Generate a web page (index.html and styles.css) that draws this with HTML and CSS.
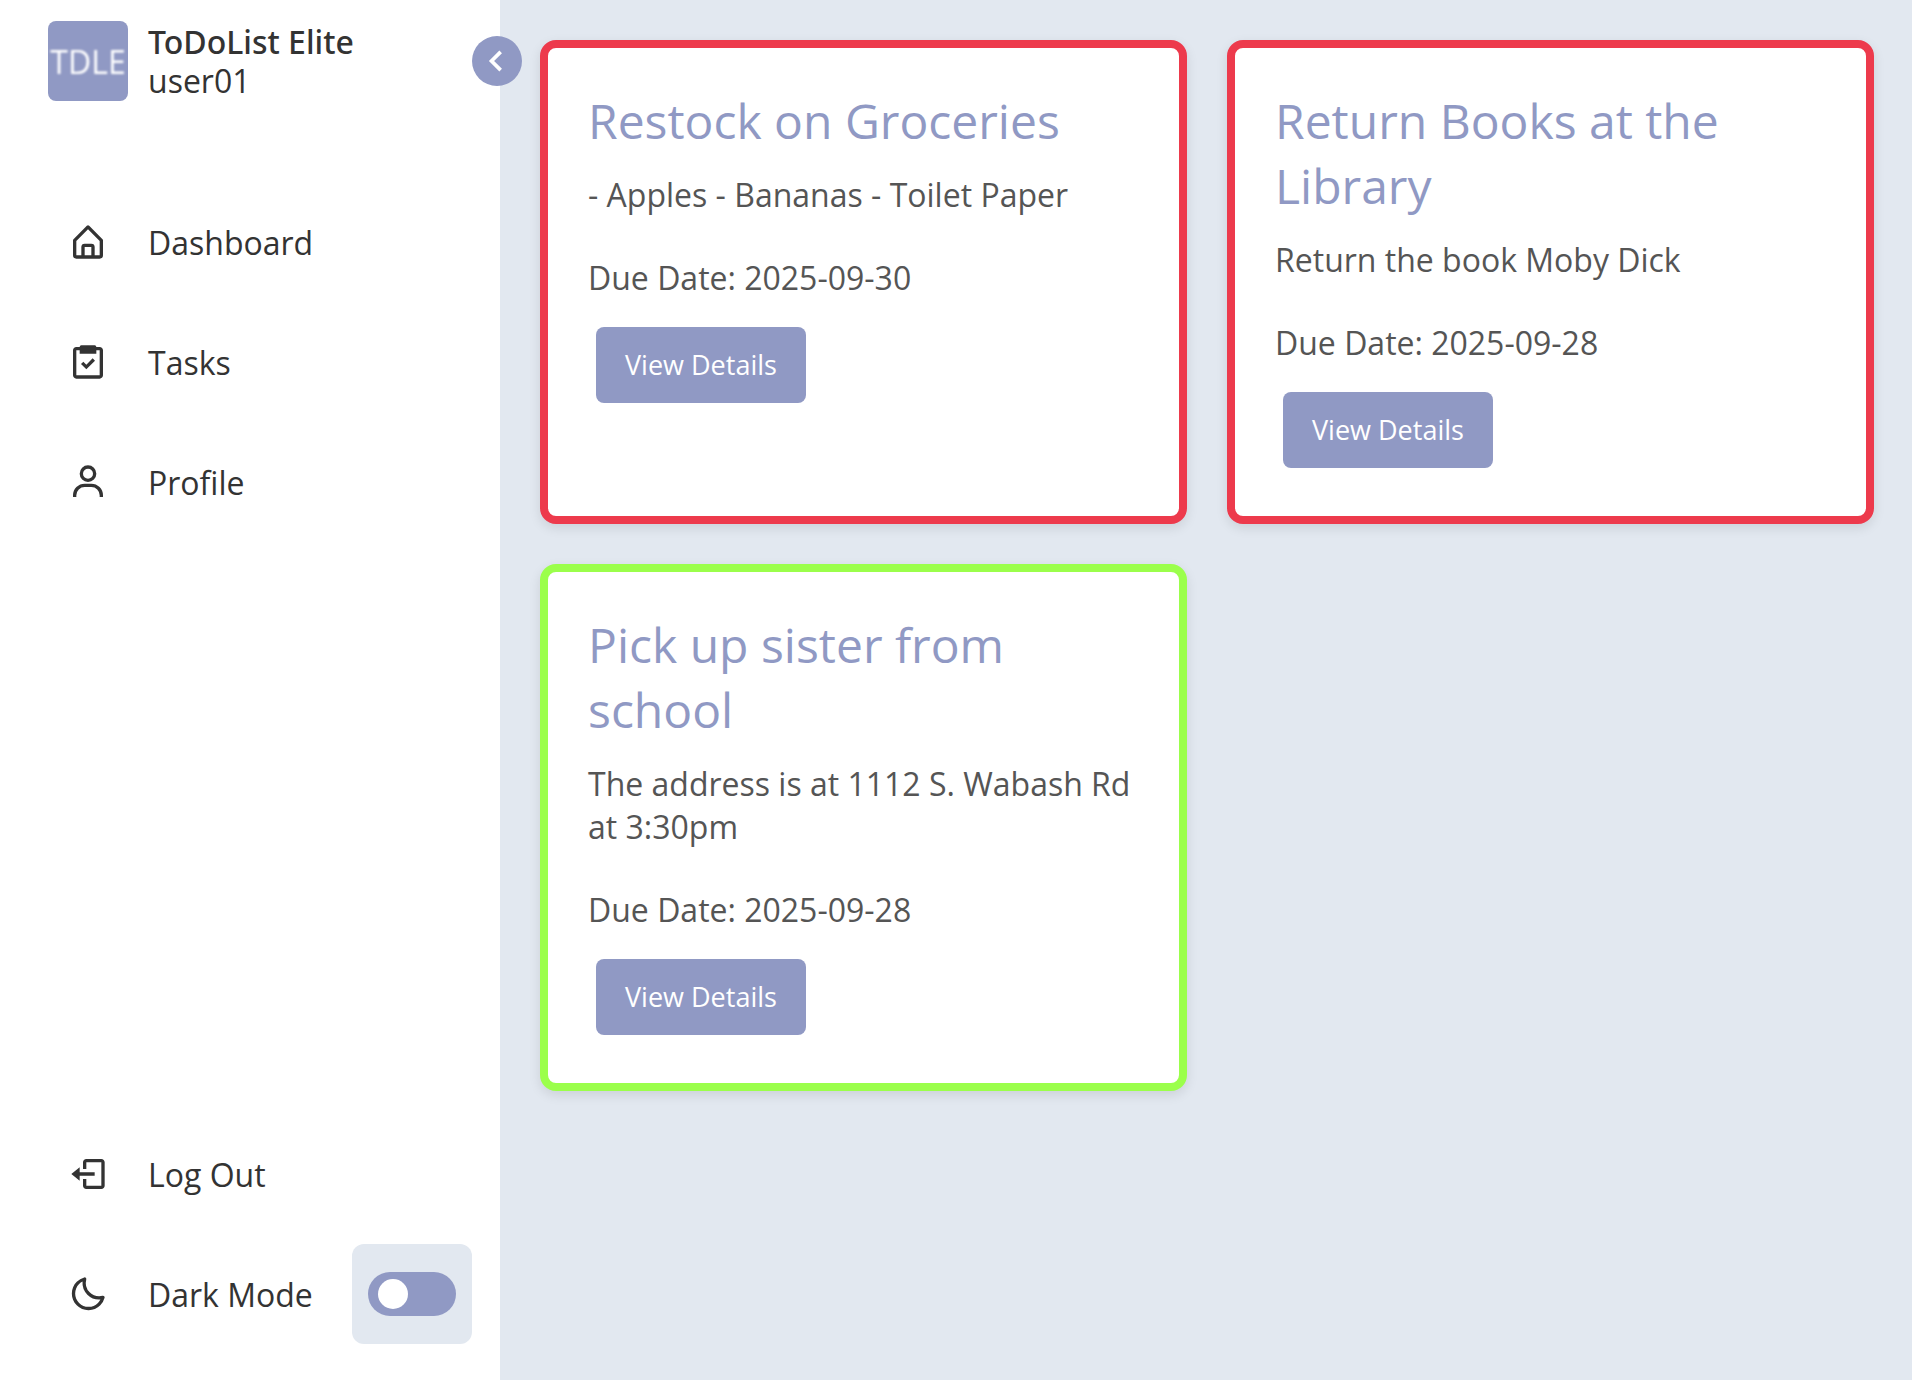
FILE: index.html
```html
<!DOCTYPE html>
<html lang="en">
<head>
<meta charset="utf-8">
<meta name="viewport" content="width=device-width, initial-scale=1">
<title>ToDoList Elite</title>
<link rel="stylesheet" href="styles.css">
</head>
<body>
<div class="app">
  <nav class="sidebar" aria-label="Main">
    <header class="brand">
      <span class="logo"><span class="logo-text">TDLE</span></span>
      <div class="brand-text">
        <span class="brand-name">ToDoList Elite</span>
        <span class="brand-user">user01</span>
      </div>
      <button class="collapse" type="button" aria-label="Collapse sidebar">
        <svg viewBox="0 0 24 24" aria-hidden="true"><path d="M13.293 6.293 7.586 12l5.707 5.707 1.414-1.414L10.414 12l4.293-4.293z"/></svg>
      </button>
    </header>
    <ul class="menu">
      <li><a class="menu-item" href="#dashboard">
        <svg class="icon" viewBox="0 0 24 24" aria-hidden="true"><path d="M5 22h14a2 2 0 0 0 2-2v-9a1 1 0 0 0-.29-.71l-8-8a1 1 0 0 0-1.41 0l-8 8A1 1 0 0 0 3 11v9a2 2 0 0 0 2 2zm5-2v-5h4v5zm-5-8.59 7-7 7 7V20h-3v-5a2 2 0 0 0-2-2h-4a2 2 0 0 0-2 2v5H5z"/></svg>
        <span>Dashboard</span></a></li>
      <li><a class="menu-item" href="#tasks">
        <svg class="icon" viewBox="0 0 24 24" aria-hidden="true"><path d="M5 22h14c1.103 0 2-.897 2-2V5c0-1.103-.897-2-2-2h-2a1 1 0 0 0-1-1H8a1 1 0 0 0-1 1H5c-1.103 0-2 .897-2 2v15c0 1.103.897 2 2 2zM5 5h2v2h10V5h2v15H5V5z"/><path d="m11 13.586-1.793-1.793-1.414 1.414L11 16.414l5.207-5.207-1.414-1.414z"/></svg>
        <span>Tasks</span></a></li>
      <li><a class="menu-item" href="#profile">
        <svg class="icon" viewBox="0 0 24 24" aria-hidden="true"><path d="M12 2a5 5 0 1 0 5 5 5 5 0 0 0-5-5zm0 8a3 3 0 1 1 3-3 3 3 0 0 1-3 3zm9 11v-1a7 7 0 0 0-7-7h-4a7 7 0 0 0-7 7v1h2v-1a5 5 0 0 1 5-5h4a5 5 0 0 1 5 5v1z"/></svg>
        <span>Profile</span></a></li>
    </ul>
    <ul class="menu menu-bottom">
      <li><a class="menu-item" href="#logout">
        <svg class="icon" viewBox="0 0 24 24" aria-hidden="true"><path d="m2 12 5 4v-3h9v-2H7V8z"/><path d="M20 3h-9c-1.103 0-2 .897-2 2v4h2V5h9v14h-9v-4H9v4c0 1.103.897 2 2 2h9c1.103 0 2-.897 2-2V5c0-1.103-.897-2-2-2z"/></svg>
        <span>Log Out</span></a></li>
      <li class="menu-item">
        <svg class="icon" viewBox="0 0 24 24" aria-hidden="true"><path d="M20.742 13.045a8.088 8.088 0 0 1-2.077.271c-2.135 0-4.14-.83-5.646-2.336a8.025 8.025 0 0 1-2.064-7.723A1 1 0 0 0 9.73 2.034a10.014 10.014 0 0 0-4.489 2.582c-3.898 3.898-3.898 10.243 0 14.143a9.937 9.937 0 0 0 7.072 2.93 9.93 9.93 0 0 0 7.07-2.929 10.007 10.007 0 0 0 2.583-4.491 1.001 1.001 0 0 0-1.224-1.224zm-2.772 4.301a7.947 7.947 0 0 1-5.656 2.343 7.953 7.953 0 0 1-5.658-2.344c-3.118-3.119-3.118-8.195 0-11.314a7.923 7.923 0 0 1 2.06-1.483 10.027 10.027 0 0 0 2.89 7.848 9.972 9.972 0 0 0 7.848 2.891 8.036 8.036 0 0 1-1.484 2.059z"/></svg>
        <label for="dark-mode">Dark Mode</label>
        <span class="switch-box"><input class="switch" type="checkbox" role="switch" id="dark-mode"></span>
      </li>
    </ul>
  </nav>
  <main class="tasks">
    <article class="card card-red">
      <h2 class="card-title">Restock on Groceries</h2>
      <p class="card-text">- Apples - Bananas - Toilet Paper</p>
      <p class="card-due">Due Date: 2025-09-30</p>
      <button class="details" type="button">View Details</button>
    </article>
    <article class="card card-red">
      <h2 class="card-title">Return Books at the Library</h2>
      <p class="card-text">Return the book Moby Dick</p>
      <p class="card-due">Due Date: 2025-09-28</p>
      <button class="details" type="button">View Details</button>
    </article>
    <article class="card card-green">
      <h2 class="card-title">Pick up sister from school</h2>
      <p class="card-text">The address is at 1112 S. Wabash Rd at 3:30pm</p>
      <p class="card-due">Due Date: 2025-09-28</p>
      <button class="details" type="button">View Details</button>
    </article>
  </main>
</div>
</body>
</html>
```
FILE: styles.css
```css
:root {
  --accent: #9099c4;
  --page: #e2e8f0;
  --ink: #333;
  --muted: #555;
}

* {
  box-sizing: border-box;
  margin: 0;
  padding: 0;
}

body {
  background: var(--page);
  color: var(--ink);
  font: 32px/43px "Open Sans", "Noto Sans", sans-serif;
}

.app {
  display: flex;
  min-height: 100vh;
}

/* Sidebar */
.sidebar {
  display: flex;
  flex-direction: column;
  flex: 0 0 500px;
  padding: 21px 28px 36px 48px;
  background: #fff;
}

.brand {
  position: relative;
  display: flex;
  align-items: center;
  gap: 20px;
}

.logo {
  display: flex;
  align-items: center;
  justify-content: center;
  width: 80px;
  height: 80px;
  border-radius: 8px;
  background: var(--accent);
  color: #fff;
}

.logo-text {
  filter: blur(1px);
}

.brand-text {
  display: flex;
  flex-direction: column;
  line-height: 39px;
}

.brand-name {
  font-family: "Noto Sans", "Open Sans", sans-serif;
  font-weight: 500;
}

.collapse {
  position: absolute;
  top: 15px;
  right: -50px;
  display: flex;
  align-items: center;
  justify-content: center;
  width: 50px;
  height: 50px;
  border: 0;
  border-radius: 50%;
  background: var(--accent);
}

.collapse svg {
  width: 44px;
  height: 44px;
  flex: none;
  fill: #fff;
}

.menu {
  display: flex;
  flex-direction: column;
  gap: 20px;
  margin-top: 91px;
  list-style: none;
}

.menu-bottom {
  margin-top: auto;
}

.menu-item {
  display: flex;
  align-items: center;
  height: 100px;
  color: inherit;
  text-decoration: none;
}

.icon {
  width: 40px;
  height: 40px;
  margin: 0 40px 0 20px;
  fill: currentColor;
}

.switch-box {
  display: flex;
  align-items: center;
  justify-content: center;
  width: 120px;
  height: 100px;
  margin-left: auto;
  border-radius: 12px;
  background: var(--page);
}

.switch {
  appearance: none;
  display: flex;
  align-items: center;
  width: 88px;
  height: 44px;
  padding: 0 10px;
  border-radius: 22px;
  background: var(--accent);
}

.switch::before {
  content: "";
  width: 30px;
  height: 30px;
  border-radius: 50%;
  background: #fff;
}

.switch:checked {
  justify-content: flex-end;
}

/* Task cards */
.tasks {
  display: grid;
  flex: 1;
  grid-template-columns: repeat(2, minmax(0, 1fr));
  align-content: start;
  gap: 40px;
  padding: 40px 38px 40px 40px;
}

.card {
  padding: 40px;
  border: 8px solid;
  border-radius: 16px;
  background: #fff;
  box-shadow: 0 4px 12px rgba(0, 0, 0, 0.1);
}

.card-red {
  border-color: #ed3a4c;
}

.card-green {
  border-color: #9bff4b;
}

.card-title {
  margin-bottom: 20px;
  color: var(--accent);
  font-size: 48px;
  font-weight: 400;
  line-height: 65px;
}

.card-text,
.card-due {
  color: var(--muted);
}

.card-text {
  margin-bottom: 40px;
}

.card-due {
  margin-bottom: 20px;
}

.details {
  display: block;
  height: 76px;
  margin: 28px 8px 8px;
  padding: 0 29px;
  border: 0;
  border-radius: 8px;
  background: var(--accent);
  color: #fff;
  font: 27px/36px "Open Sans", "Noto Sans", sans-serif;
}
```
